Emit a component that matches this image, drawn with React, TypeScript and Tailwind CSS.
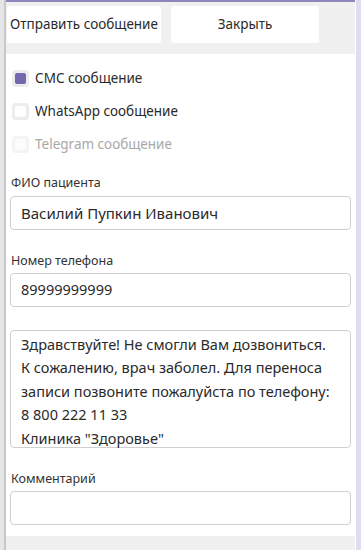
import { useState } from 'react';

const font = { fontFamily: '"Segoe UI", "Noto Sans", "Open Sans", sans-serif' };

function Check({ checked, disabled, label }: { checked?: boolean; disabled?: boolean; label: string }) {
  return (
    <label className="flex items-center gap-[6px] h-[33px]">
      <span
        className={`w-[17px] h-[17px] rounded-[4px] flex items-center justify-center ${
          disabled ? 'bg-[#f4f4f4]' : 'bg-[#ececec]'
        }`}
      >
        <span
          className={`w-[11px] h-[11px] rounded-[2px] ${
            checked ? 'bg-[#7566b0]' : disabled ? 'bg-[#fcfcfc]' : 'bg-white'
          }`}
        />
      </span>
      <span className={`text-[13.5px] ${disabled ? 'text-[#a8a8a8]' : 'text-[#2a2a2a]'}`}>{label}</span>
    </label>
  );
}

export default function App() {
  const [msg] = useState(
    'Здравствуйте! Не смогли Вам дозвониться.\nК сожалению, врач заболел. Для переноса записи позвоните пожалуйста по телефону:\n8 800 222 11 33\nКлиника "Здоровье"'
  );

  return (
    <div className="w-[361px] h-[550px] flex bg-white overflow-hidden" style={font}>
      {/* left edge */}
      <div className="w-[6px] shrink-0 bg-[#e6e6e6] border-r-2 border-[#c8c8c8]" />

      <div className="w-[349px] flex flex-col">
        <div className="h-[2px] bg-[#8d86bb]" />
        <div className="bg-[#f0f0f0] h-[52px] flex gap-[10px] pl-[1px] pt-[4px]">
          <button className="w-[154px] h-[37px] bg-white rounded-[3px] text-[13.5px] text-[#2a2a2a]">
            Отправить сообщение
          </button>
          <button className="w-[148px] h-[37px] bg-white rounded-[3px] text-[13.5px] text-[#2a2a2a]">
            Закрыть
          </button>
        </div>

        <div className="bg-white h-[482px] flex flex-col px-[4px] pt-[8px]">
          <div className="pl-[2px]">
            <Check checked label="СМС сообщение" />
            <Check label="WhatsApp сообщение" />
            <Check disabled label="Telegram сообщение" />
          </div>

          <div className="mt-[13px] text-[12.5px] leading-[18px] text-[#333] pl-[1px]">ФИО пациента</div>
          <div className="mt-[4px] h-[34px] border border-[#d0d0d0] rounded-[4px] flex items-center px-[10px] text-[15px] text-[#2a2a2a]">
            Василий Пупкин Иванович
          </div>

          <div className="mt-[22px] text-[12.5px] leading-[18px] text-[#333] pl-[1px]">Номер телефона</div>
          <div className="mt-[3px] h-[34px] border border-[#d0d0d0] rounded-[4px] flex items-center px-[10px] text-[14.5px] text-[#2a2a2a]">
            89999999999
          </div>

          <div className="mt-[23px] h-[118px] border border-[#d0d0d0] rounded-[4px] px-[10px] pt-[2px] text-[14.5px] leading-[23.4px] text-[#2a2a2a] whitespace-pre-line">
            {msg}
          </div>

          <div className="mt-[22px] text-[12.5px] leading-[18px] text-[#333] pl-[1px]">Комментарий</div>
          <div className="mt-[3px] h-[34px] border border-[#d0d0d0] rounded-[4px]" />
        </div>

        <div className="flex-1 bg-[#f0f0f0]" />
      </div>

      <div className="w-[1px] bg-white" />
      <div className="flex-1 bg-[#e0ddf0]" />
    </div>
  );
}
